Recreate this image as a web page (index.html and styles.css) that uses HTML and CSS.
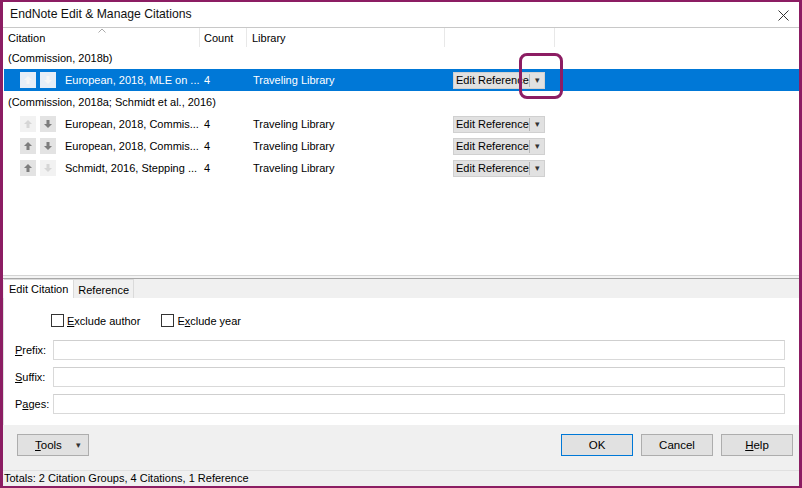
FILE: index.html
```html
<!DOCTYPE html>
<html lang="en">
<head>
    <meta charset="UTF-8">
    <title>EndNote Edit &amp; Manage Citations</title>
    <link rel="stylesheet" href="styles.css">
</head>
<body>
<div class="window">
    <div class="titlebar">
        <span class="title">EndNote Edit &amp; Manage Citations</span>
        <svg class="close" width="11" height="11" viewBox="0 0 11 11"><path d="M0.5 0.5 L10.5 10.5 M10.5 0.5 L0.5 10.5" stroke="#333" stroke-width="1"/></svg>
    </div>

    <div class="list">
        <div class="list-head">
            <div class="hcell">Citation
                <svg class="sort" width="8" height="5" viewBox="0 0 8 5"><path d="M0.5 4.5 L4 1 L7.5 4.5" fill="none" stroke="#aaa" stroke-width="1"/></svg>
            </div>
            <div class="hcell">Count</div>
            <div class="hcell lib">Library</div>
            <div class="hcell"></div>
        </div>

        <div class="group">(Commission, 2018b)</div>
        <div class="row selected">
            <div class="cite">
                <span class="mv off"><svg viewBox="0 0 10 10"><path d="M5 1 L9 5 H6.5 V9 H3.5 V5 H1 Z"/></svg></span>
                <span class="mv off"><svg viewBox="0 0 10 10"><path d="M5 9 L9 5 H6.5 V1 H3.5 V5 H1 Z"/></svg></span>
                <span class="text">European, 2018, MLE on ...</span>
            </div>
            <div class="cell">4</div>
            <div class="cell lib">Traveling Library</div>
            <div class="cell"><span class="edit-btn"><span class="lbl">Edit Reference</span><span class="drop">&#9662;</span></span></div>
        </div>

        <div class="group">(Commission, 2018a; Schmidt et al., 2016)</div>
        <div class="row">
            <div class="cite">
                <span class="mv off"><svg viewBox="0 0 10 10"><path d="M5 1 L9 5 H6.5 V9 H3.5 V5 H1 Z"/></svg></span>
                <span class="mv"><svg viewBox="0 0 10 10"><path d="M5 9 L9 5 H6.5 V1 H3.5 V5 H1 Z"/></svg></span>
                <span class="text">European, 2018, Commis...</span>
            </div>
            <div class="cell">4</div>
            <div class="cell lib">Traveling Library</div>
            <div class="cell"><span class="edit-btn"><span class="lbl">Edit Reference</span><span class="drop">&#9662;</span></span></div>
        </div>
        <div class="row">
            <div class="cite">
                <span class="mv"><svg viewBox="0 0 10 10"><path d="M5 1 L9 5 H6.5 V9 H3.5 V5 H1 Z"/></svg></span>
                <span class="mv"><svg viewBox="0 0 10 10"><path d="M5 9 L9 5 H6.5 V1 H3.5 V5 H1 Z"/></svg></span>
                <span class="text">European, 2018, Commis...</span>
            </div>
            <div class="cell">4</div>
            <div class="cell lib">Traveling Library</div>
            <div class="cell"><span class="edit-btn"><span class="lbl">Edit Reference</span><span class="drop">&#9662;</span></span></div>
        </div>
        <div class="row">
            <div class="cite">
                <span class="mv"><svg viewBox="0 0 10 10"><path d="M5 1 L9 5 H6.5 V9 H3.5 V5 H1 Z"/></svg></span>
                <span class="mv off"><svg viewBox="0 0 10 10"><path d="M5 9 L9 5 H6.5 V1 H3.5 V5 H1 Z"/></svg></span>
                <span class="text">Schmidt, 2016, Stepping ...</span>
            </div>
            <div class="cell">4</div>
            <div class="cell lib">Traveling Library</div>
            <div class="cell"><span class="edit-btn"><span class="lbl">Edit Reference</span><span class="drop">&#9662;</span></span></div>
        </div>
    </div>

    <div class="splitter"></div>

    <div class="tabs">
        <span class="tab active">Edit Citation</span>
        <span class="tab">Reference</span>
    </div>

    <div class="tab-body">
        <div class="checks">
            <label class="check"><span class="box"></span><u>E</u>xclude author</label>
            <label class="check"><span class="box"></span>E<u>x</u>clude year</label>
        </div>
        <div class="field"><span class="flabel"><u>P</u>refix:</span><span class="input"></span></div>
        <div class="field"><span class="flabel"><u>S</u>uffix:</span><span class="input"></span></div>
        <div class="field"><span class="flabel">P<u>a</u>ges:</span><span class="input"></span></div>
    </div>

    <div class="buttons">
        <button class="btn tools"><span><u>T</u>ools</span><span class="tri">&#9662;</span></button>
        <div class="right">
            <button class="btn default">OK</button>
            <button class="btn">Cancel</button>
            <button class="btn"><u>H</u>elp</button>
        </div>
    </div>

    <div class="status">Totals: 2 Citation Groups, 4 Citations, 1 Reference</div>

    <div class="callout"></div>
</div>
</body>
</html>
```

FILE: styles.css
```css
body {
    margin: 0;
    padding: 0;
    font-family: "Liberation Sans", Arial, sans-serif;
    font-size: 11px;
    color: #000;
}

.window {
    position: relative;
    width: 802px;
    height: 488px;
    box-sizing: border-box;
    border: 2px solid #8c1d63;
    border-left-width: 3px;
    border-right-width: 3px;
    display: flex;
    flex-direction: column;
    background-color: #fff;
}

.titlebar {
    height: 25px;
    flex: none;
    border-bottom: 1px solid #c8c8c8;
    display: flex;
    align-items: center;
    justify-content: space-between;
    padding: 0 10px 0 7px;
}

.title {
    font-size: 12.2px;
    color: #111;
    margin-top: -1px;
}

.close {
    display: block;
    margin-top: 1px;
}

.list {
    height: 247px;
    flex: none;
    padding-left: 1px;
}

.list-head, .row {
    display: grid;
    grid-template-columns: 196px 47px 198px 110px;
}

.list-head {
    height: 19px;
}

.hcell {
    position: relative;
    border-right: 1px solid #e8e8e8;
    padding: 4px 0 0 4px;
}

.hcell.lib {
    padding-left: 5px;
}

.sort {
    position: absolute;
    left: 94px;
    top: 0;
}

.group {
    height: 22px;
    line-height: 23px;
    padding-left: 4px;
}

.row {
    height: 22px;
    align-items: center;
}

.row.selected {
    background-color: #0078d7;
    color: #fff;
}

.cite {
    display: flex;
    align-items: center;
    padding-left: 16px;
    white-space: nowrap;
    overflow: hidden;
}

.mv {
    flex: none;
    width: 16px;
    height: 16px;
    margin-right: 4px;
    background-color: #e3e3e3;
    display: flex;
    align-items: center;
    justify-content: center;
}

.mv svg {
    width: 10px;
    height: 10px;
    fill: #7d7d7d;
}

.mv.off {
    background-color: #f2f2f2;
}

.mv.off svg {
    fill: #d6d6d6;
}

.selected .mv.off {
    background-color: #e6eef7;
}

.selected .mv.off svg {
    fill: #f6f6f6;
}

.cite .text {
    margin-left: 5px;
}

.cell {
    padding-left: 4px;
    white-space: nowrap;
}

.cell.lib {
    padding-left: 6px;
}

.edit-btn {
    margin-left: 4px;
    width: 92px;
    height: 17px;
    box-sizing: border-box;
    background-color: #e1e1e1;
    border: 1px solid #d0d0d0;
    color: #000;
    display: flex;
    align-items: center;
}

.edit-btn .lbl {
    padding-left: 2px;
    width: 73px;
    border-right: 1px solid #b5b5b5;
    line-height: 13px;
}

.edit-btn .drop, .tri {
    font-size: 9px;
    color: #333;
}

.edit-btn .drop {
    margin-left: 5px;
}

.splitter {
    height: 2px;
    flex: none;
    border-top: 1px solid #d4d4d4;
    border-bottom: 1px solid #a8a8a8;
    background-color: #f4f4f4;
}

.tabs {
    height: 19px;
    flex: none;
    background-color: #f0f0f0;
    display: flex;
    align-items: stretch;
    padding-left: 1px;
}

.tab {
    padding: 4px 4px 0 4px;
    border: 1px solid #dadada;
    border-bottom: none;
    border-left: none;
}

.tab.active {
    background-color: #fff;
    padding: 3px 5px 0 5px;
}

.tab-body {
    height: 127px;
    flex: none;
    background-color: #fff;
    border-left: 1px solid #e0e0e0;
    padding: 16px 14px 0 11px;
    box-sizing: border-box;
}

.checks {
    display: flex;
    padding-left: 36px;
    height: 13px;
    margin-bottom: 13px;
}

.check {
    display: flex;
    align-items: center;
    margin-right: 21px;
}

.box {
    width: 11px;
    height: 11px;
    border: 1px solid #333;
    background-color: #fff;
    margin-right: 3px;
}

.field {
    display: flex;
    align-items: center;
    height: 20px;
    margin-bottom: 7px;
}

.flabel {
    width: 38px;
    flex: none;
}

.input {
    flex: 1;
    height: 20px;
    box-sizing: border-box;
    border: 1px solid #d9d9d9;
    border-top-color: #cfcfcf;
    background-color: #fff;
}

.buttons {
    flex: 1;
    background-color: #f0f0f0;
    border-bottom: 1px solid #e0e0e0;
    display: flex;
    justify-content: space-between;
    align-items: flex-start;
    padding: 9px 6px 0 14px;
}

.btn {
    font-family: "Liberation Sans", Arial, sans-serif;
    font-size: 11.5px;
    width: 72px;
    height: 22px;
    background-color: #e1e1e1;
    border: 1px solid #adadad;
    padding: 0;
    color: #000;
}

.btn.default {
    border-color: #0078d7;
}

.right {
    display: flex;
    gap: 8px;
}

.tools {
    width: 72px;
    display: flex;
    align-items: center;
    justify-content: space-between;
    padding: 0 7px 0 17px;
}

.status {
    height: 15px;
    flex: none;
    background-color: #f0f0f0;
    padding-left: 1px;
    font-size: 11px;
    line-height: 15px;
}

.callout {
    position: absolute;
    left: 516px;
    top: 51px;
    width: 38px;
    height: 40px;
    border: 3px solid #8c1d63;
    border-radius: 8px;
}
```
